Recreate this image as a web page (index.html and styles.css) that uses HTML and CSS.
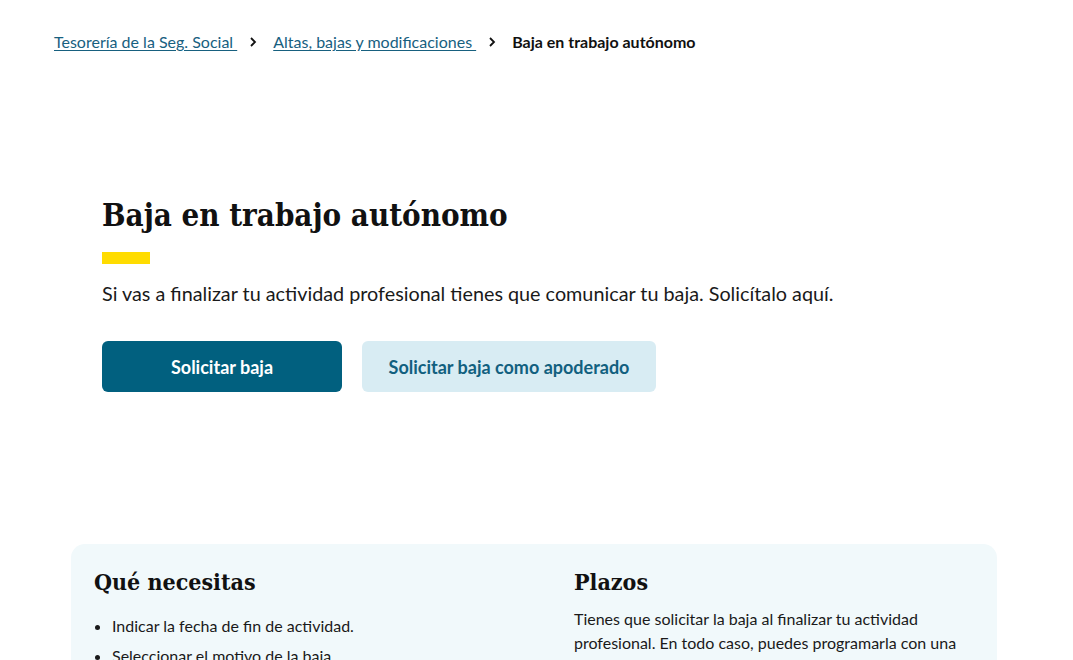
FILE: index.html
```html
<!DOCTYPE html>
<html lang="es">
<head>
  <meta charset="UTF-8">
  <meta name="viewport" content="width=device-width, initial-scale=1.0">
  <title>Baja en trabajo autónomo</title>
  <link rel="stylesheet" href="styles.css">
</head>
<body>
<nav class="breadcrumb">
  <a href="#">Tesorería de la Seg. Social </a>
  <svg class="crumb-sep" width="8" height="12" viewBox="0 0 8 12"><path d="M2 2l4 4-4 4" fill="none" stroke="#111" stroke-width="1.8"/></svg>
  <a href="#">Altas, bajas y modificaciones </a>
  <svg class="crumb-sep" width="8" height="12" viewBox="0 0 8 12"><path d="M2 2l4 4-4 4" fill="none" stroke="#111" stroke-width="1.8"/></svg>
  <span class="current">Baja en trabajo autónomo</span>
</nav>

<main class="hero">
  <h1>Baja en trabajo autónomo</h1>
  <div class="accent"></div>
  <p class="lead">Si vas a finalizar tu actividad profesional tienes que comunicar tu baja. Solicítalo aquí.</p>
  <div class="actions">
    <button class="btn btn-primary">Solicitar baja</button>
    <button class="btn btn-secondary">Solicitar baja como apoderado</button>
  </div>
</main>

<section class="info-card">
  <div class="info-col">
    <h2>Qué necesitas</h2>
    <ul>
      <li>Indicar la fecha de fin de actividad.</li>
      <li>Seleccionar el motivo de la baja.</li>
    </ul>
  </div>
  <div class="info-col">
    <h2>Plazos</h2>
    <p>Tienes que solicitar la baja al finalizar tu actividad profesional. En todo caso, puedes programarla con una antelación de hasta 60 días naturales.</p>
  </div>
</section>
</body>
</html>
```

FILE: styles.css
```css
body {
  font-family: Lato, "Noto Sans", sans-serif;
  background-color: #fff;
  color: #1a1a1a;
  margin: 0;
  padding: 0;
}
.breadcrumb {
  display: flex;
  align-items: center;
  padding: 33px 54px 0;
  font-size: 16px;
  line-height: 18px;
}
.breadcrumb a {
  color: #17607f;
  text-decoration: underline;
  text-underline-offset: 2px;
  white-space: pre;
}
.crumb-sep {
  flex: none;
  margin: 0 16px 0 12px;
}
.breadcrumb .current {
  font-weight: 700;
  color: #111;
}
.hero {
  padding: 144px 102px 0;
}
h1, h2 {
  font-family: "DejaVu Serif Condensed", "DejaVu Serif", "Liberation Serif", serif;
  font-stretch: condensed;
  font-weight: 700;
  color: #111;
  margin: 0;
}
h1 {
  font-size: 31px;
  line-height: 40px;
}
.accent {
  width: 48px;
  height: 12px;
  background-color: #ffdc00;
  margin-top: 17px;
}
.lead {
  font-size: 19.8px;
  line-height: 26px;
  margin: 16px 0 0;
  color: #1a1a1a;
}
.actions {
  display: flex;
  gap: 20px;
  margin-top: 35px;
}
.btn {
  font-family: Lato, sans-serif;
  font-size: 18px;
  font-weight: 700;
  height: 51px;
  border: none;
  border-radius: 6px;
  cursor: pointer;
}
.btn-primary {
  width: 240px;
  background-color: #01607f;
  color: #fff;
}
.btn-secondary {
  width: 294px;
  background-color: #d8ecf3;
  color: #11607f;
}
.info-card {
  display: grid;
  grid-template-columns: 480px 1fr;
  width: 926px;
  box-sizing: border-box;
  margin: 152px 0 0 71px;
  padding: 22px 40px 0 23px;
  background-color: #f1f9fb;
  border-radius: 14px;
  min-height: 140px;
}
h2 {
  font-size: 23px;
  line-height: 32px;
}
.info-col ul {
  margin: 13px 0 0;
  padding-left: 18px;
  font-size: 16px;
  line-height: 30px;
}
.info-col p {
  margin: 9px 0 0;
  font-size: 16px;
  line-height: 24px;
}
```
